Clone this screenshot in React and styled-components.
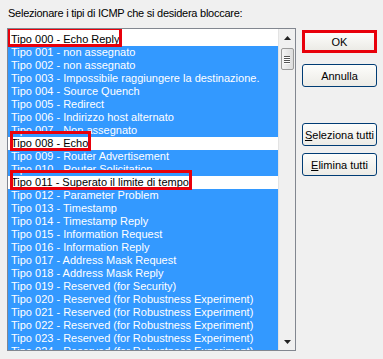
import styled, { createGlobalStyle } from "styled-components";

const GlobalStyle = createGlobalStyle`
  body {
    margin: 0;
    background: #f0f0f0;
    font-family: "Liberation Sans", Arial, sans-serif;
    font-size: 11px;
  }
`;

const Dialog = styled.div`
  width: 383px;
  height: 359px;
  box-sizing: border-box;
  padding: 7px 6px 0 7px;
  background: #f0f0f0;
  color: #000;
  overflow: hidden;
`;

const Caption = styled.div`
  height: 13px;
  line-height: 13px;
  padding-left: 1px;
  margin-bottom: 8px;
  letter-spacing: -0.25px;
`;

const Body = styled.div`
  display: flex;
  gap: 6px;
  align-items: flex-start;
`;

const ListBox = styled.div`
  display: flex;
  width: 290px;
  height: 323px;
  box-sizing: border-box;
  border: 1px solid #828790;
  background: #fff;
`;

const Rows = styled.div`
  flex: 1;
  padding-top: 4px;
  overflow: hidden;
`;

const Row = styled.div`
  height: 13px;
  line-height: 13px;
  padding-left: 3px;
  white-space: nowrap;
  background: ${(p) => (p.$selected ? "#3399ff" : "#fff")};
  color: ${(p) => (p.$selected ? "#fff" : "#000")};
`;

const Mark = styled.span`
  display: inline-block;
  position: relative;
  z-index: 1;
  height: 13px;

  &::after {
    content: "";
    position: absolute;
    top: -6px;
    bottom: -1px;
    left: ${(p) => p.$left}px;
    right: -3px;
    border: 3px solid #e8000b;
  }
`;

const ScrollBar = styled.div`
  width: 16px;
  display: flex;
  flex-direction: column;
  align-items: center;
  background: #f0f0f0;
  border-left: 1px solid #e3e3e3;
`;

const Arrow = styled.div`
  height: 17px;
  width: 100%;
  display: flex;
  align-items: center;
  justify-content: center;
`;

const Thumb = styled.div`
  width: 13px;
  height: 22px;
  margin-top: 2px;
  box-sizing: border-box;
  border: 1px solid #9a9a9a;
  border-radius: 2px;
  background: linear-gradient(90deg, #f4f4f4, #dcdcdc);
  display: flex;
  flex-direction: column;
  justify-content: center;
  align-items: center;
  gap: 1px;
`;

const Grip = styled.div`
  width: 6px;
  height: 1px;
  background: #555;
  box-shadow: 0 1px 0 #fff;
`;

const Track = styled.div`
  flex: 1;
`;

const Buttons = styled.div`
  display: flex;
  flex-direction: column;
  padding-top: 2px;
`;

const Button = styled.button`
  width: 75px;
  height: 23px;
  margin-top: ${(p) => p.$gap || 0}px;
  box-sizing: border-box;
  font-family: "Liberation Sans", Arial, sans-serif;
  font-size: 11px;
  color: #000;
  padding: 0;
  background: linear-gradient(#fdfdfb, #ecebe6);
  border: ${(p) => (p.$marked ? "3px solid #e8000b" : "1px solid #003c74")};
  border-radius: ${(p) => (p.$marked ? "0" : "3px")};

  u {
    text-decoration: underline;
  }
`;

const items = [
  "Echo Reply",
  "non assegnato",
  "non assegnato",
  "Impossibile raggiungere la destinazione.",
  "Source Quench",
  "Redirect",
  "Indirizzo host alternato",
  "Non assegnato",
  "Echo",
  "Router Advertisement",
  "Router Solicitation",
  "Superato il limite di tempo",
  "Parameter Problem",
  "Timestamp",
  "Timestamp Reply",
  "Information Request",
  "Information Reply",
  "Address Mask Request",
  "Address Mask Reply",
  "Reserved (for Security)",
  "Reserved (for Robustness Experiment)",
  "Reserved (for Robustness Experiment)",
  "Reserved (for Robustness Experiment)",
  "Reserved (for Robustness Experiment)",
  "Reserved (for Robustness Experiment)",
];

// unselected rows, each with a hand-drawn red frame
const marked = { 0: -4, 8: -1, 11: -1 };

function App() {
  return (
    <Dialog>
      <GlobalStyle />
      <Caption>Selezionare i tipi di ICMP che si desidera bloccare:</Caption>
      <Body>
        <ListBox>
          <Rows>
            {items.map((label, i) => {
              const text = `Tipo ${String(i).padStart(3, "0")} - ${label}`;
              const off = i in marked;
              return (
                <Row key={i} $selected={!off}>
                  {off ? <Mark $left={marked[i]}>{text}</Mark> : text}
                </Row>
              );
            })}
          </Rows>
          <ScrollBar>
            <Arrow>
              <svg width="7" height="4" viewBox="0 0 7 4">
                <path d="M0 4 L3.5 0 L7 4 Z" fill="#222" />
              </svg>
            </Arrow>
            <Thumb>
              <Grip />
              <Grip />
              <Grip />
              <Grip />
            </Thumb>
            <Track />
            <Arrow>
              <svg width="7" height="4" viewBox="0 0 7 4">
                <path d="M0 0 L7 0 L3.5 4 Z" fill="#222" />
              </svg>
            </Arrow>
          </ScrollBar>
        </ListBox>
        <Buttons>
          <Button $marked>OK</Button>
          <Button $gap={11}>Annulla</Button>
          <Button $gap={36}>
            <u>S</u>eleziona tutti
          </Button>
          <Button $gap={7}>
            <u>E</u>limina tutti
          </Button>
        </Buttons>
      </Body>
    </Dialog>
  );
}

export default App;
